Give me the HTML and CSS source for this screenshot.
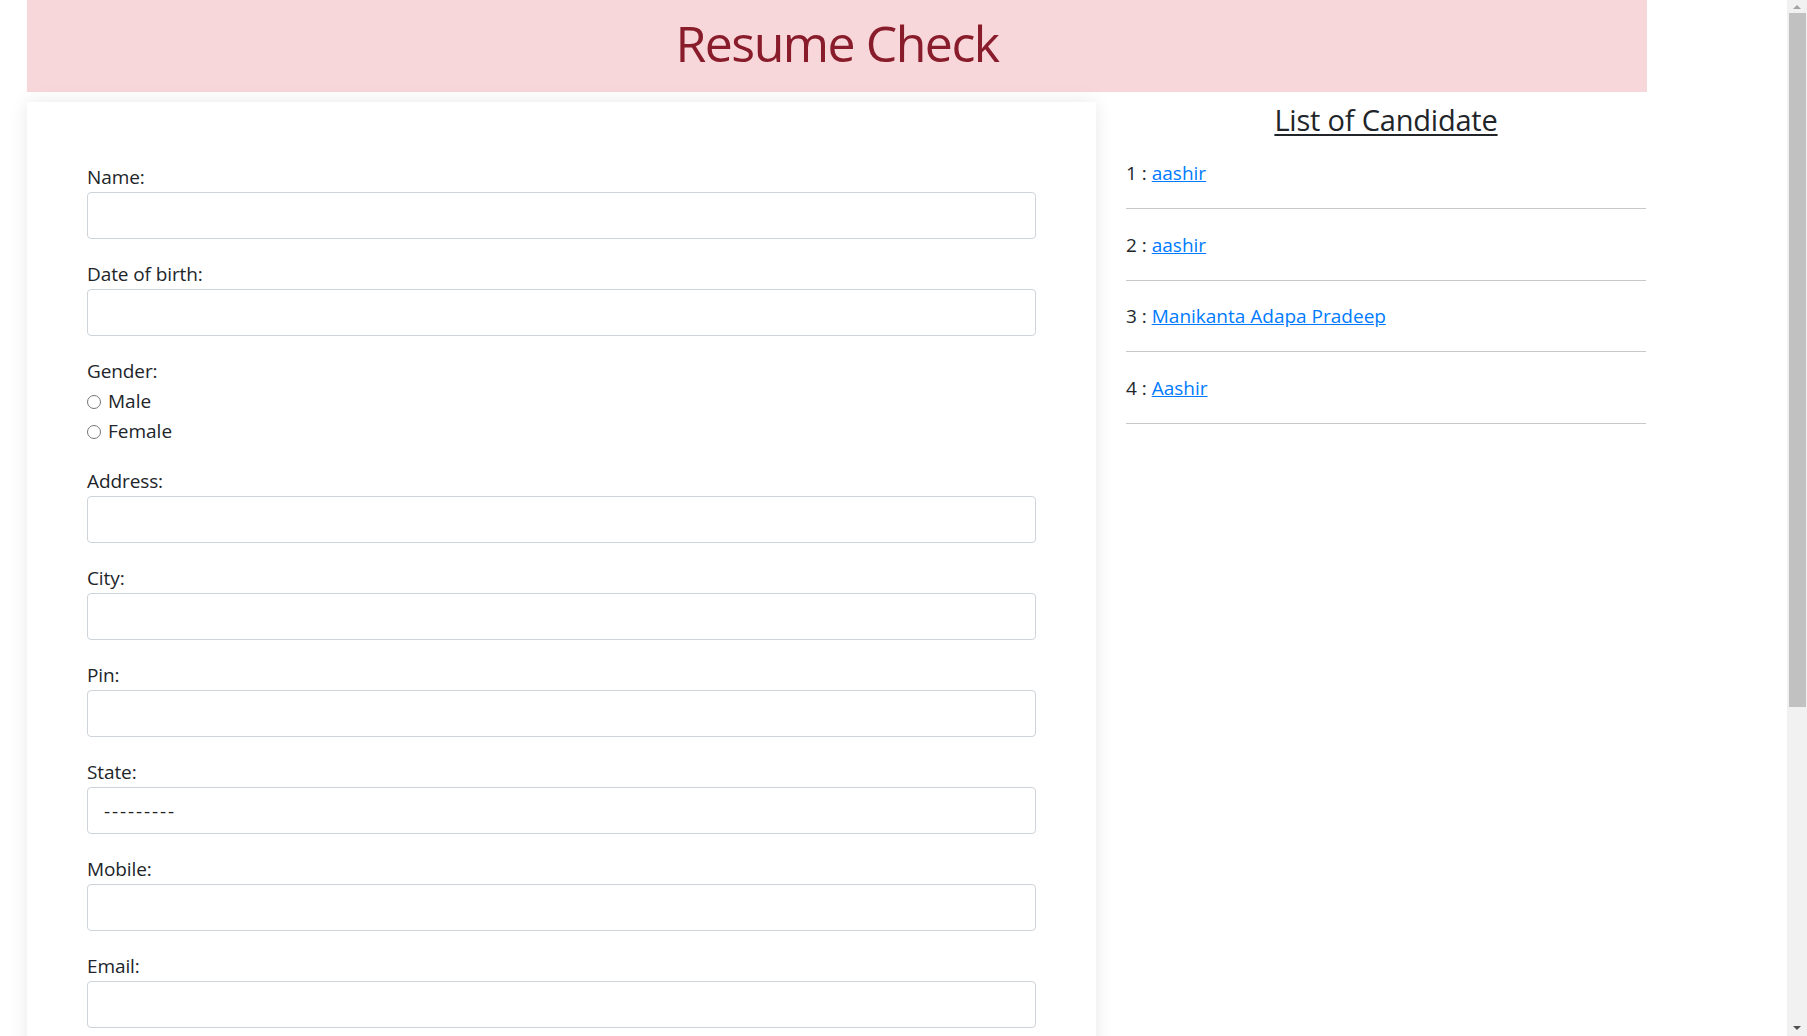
FILE: index.html
```html
<!DOCTYPE html>
<html lang="en">
<head>
<meta charset="utf-8">
<title>Resume Check</title>
<link rel="stylesheet" href="styles.css">
</head>
<body>
<div class="page">
  <header class="banner">
    <h1 class="banner-title">Resume Check</h1>
  </header>
  <div class="main-row">
    <section class="form-card">
      <form class="resume-form">
        <div class="field">
          <label class="field-label" for="name">Name:</label>
          <input class="field-input" type="text" id="name">
        </div>
        <div class="field">
          <label class="field-label" for="dob">Date of birth:</label>
          <input class="field-input" type="text" id="dob">
        </div>
        <div class="field">
          <div class="field-label">Gender:</div>
          <div class="radio-line"><input class="radio" type="radio" name="gender" id="g-male"> <label for="g-male">Male</label></div>
          <div class="radio-line"><input class="radio" type="radio" name="gender" id="g-female"> <label for="g-female">Female</label></div>
        </div>
        <div class="field">
          <label class="field-label" for="address">Address:</label>
          <input class="field-input" type="text" id="address">
        </div>
        <div class="field">
          <label class="field-label" for="city">City:</label>
          <input class="field-input" type="text" id="city">
        </div>
        <div class="field">
          <label class="field-label" for="pin">Pin:</label>
          <input class="field-input" type="text" id="pin">
        </div>
        <div class="field">
          <label class="field-label" for="state">State:</label>
          <select class="field-input field-select" id="state">
            <option>---------</option>
          </select>
        </div>
        <div class="field">
          <label class="field-label" for="mobile">Mobile:</label>
          <input class="field-input" type="text" id="mobile">
        </div>
        <div class="field">
          <label class="field-label" for="email">Email:</label>
          <input class="field-input" type="text" id="email">
        </div>
        <div class="field">
          <label class="field-label" for="jobcity">Job city:</label>
          <input class="field-input" type="text" id="jobcity">
        </div>
        <div class="field">
          <label class="field-label" for="resume">Resume:</label>
          <input class="field-input" type="text" id="resume">
        </div>
        <button class="submit-btn" type="button">Submit</button>
      </form>
    </section>
    <aside class="cand-col">
      <h2 class="cand-title">List of Candidate</h2>
      <div class="cand-item"><span class="cand-num">1 : </span><a class="cand-link" href="#">aashir</a></div>
      <hr class="cand-rule">
      <div class="cand-item"><span class="cand-num">2 : </span><a class="cand-link" href="#">aashir</a></div>
      <hr class="cand-rule">
      <div class="cand-item"><span class="cand-num">3 : </span><a class="cand-link" href="#">Manikanta Adapa Pradeep</a></div>
      <hr class="cand-rule">
      <div class="cand-item"><span class="cand-num">4 : </span><a class="cand-link" href="#">Aashir</a></div>
      <hr class="cand-rule">
    </aside>
  </div>
</div>
<div class="fake-scrollbar" aria-hidden="true">
  <div class="sb-arrow sb-up"></div>
  <div class="sb-thumb"></div>
  <div class="sb-space"></div>
  <div class="sb-arrow sb-down"></div>
</div>
</body>
</html>
```

FILE: styles.css
```css
html, body {
  margin: 0;
  padding: 0;
  background: #ffffff;
}
body {
  font-family: "Open Sans", "Noto Sans", "Liberation Sans", sans-serif;
  color: #212529;
  font-size: 19px;
}
.page {
  padding-left: 27px;
  width: 1620px;
}
.banner {
  height: 92px;
  background: #f8d7da;
  display: flex;
  justify-content: center;
  padding-bottom: 6px;
  box-sizing: border-box;
}
.banner-title {
  margin: 0;
  font-size: 50px;
  font-weight: 500;
  line-height: 86px;
  letter-spacing: -1.5px;
  color: #891c2b;
}
.main-row {
  display: flex;
  gap: 30px;
  margin-top: 10px;
  align-items: flex-start;
}
.form-card {
  width: 1069px;
  box-sizing: border-box;
  padding: 60px 60px 40px;
  background: #fff;
  box-shadow: 0 0 18px rgba(0, 0, 0, 0.09);
}
.field {
  margin-bottom: 20px;
}
.field-label {
  display: block;
  line-height: 30px;
  letter-spacing: -0.1px;
}
.field-input {
  display: block;
  width: 100%;
  height: 47px;
  box-sizing: border-box;
  border: 1px solid #ced4da;
  border-radius: 4px;
  background: #fff;
  font: inherit;
  color: #495057;
  padding: 0 16px;
  margin: 0;
  outline: none;
}
.field-select {
  -webkit-appearance: none;
  appearance: none;
  color: #212529;
  letter-spacing: 1.9px;
}
.radio-line {
  line-height: 30px;
  display: flex;
  align-items: center;
}
.radio-line label {
  margin-left: 4px;
}
.radio {
  width: 14px;
  height: 14px;
  margin: 1px 3px 0 0;
}
.submit-btn {
  font: inherit;
  color: #fff;
  background: #007bff;
  border: 1px solid #007bff;
  border-radius: 4px;
  padding: 6px 16px;
}
.cand-col {
  width: 520px;
}
.cand-title {
  margin: 0 0 20px;
  text-align: center;
  font-size: 29px;
  font-weight: 500;
  line-height: 36px;
  letter-spacing: -0.2px;
  text-decoration: underline;
  text-decoration-thickness: 2px;
  text-underline-offset: 3px;
  color: #212529;
}
.cand-item {
  line-height: 30px;
  margin-top: 20.5px;
}
.cand-title + .cand-item {
  margin-top: 0;
}
.cand-link {
  color: #007bff;
  text-decoration: underline;
}
.cand-rule {
  border: 0;
  border-top: 1px solid #c8c8c8;
  height: 0;
  margin: 20px 0 0;
}
.fake-scrollbar {
  position: fixed;
  top: 0;
  right: 0;
  width: 20px;
  height: 100vh;
  background: #f1f1f1;
  display: flex;
  flex-direction: column;
  align-items: center;
}
.sb-arrow {
  width: 0;
  height: 0;
  border-left: 4px solid transparent;
  border-right: 4px solid transparent;
}
.sb-up {
  margin: 5px 0 4px;
  border-bottom: 4px solid #a3a3a3;
}
.sb-thumb {
  width: 17px;
  height: 694px;
  background: #c1c1c1;
}
.sb-space {
  flex: 1;
}
.sb-down {
  margin: 5px 0 6px;
  border-top: 4px solid #505050;
}
```
